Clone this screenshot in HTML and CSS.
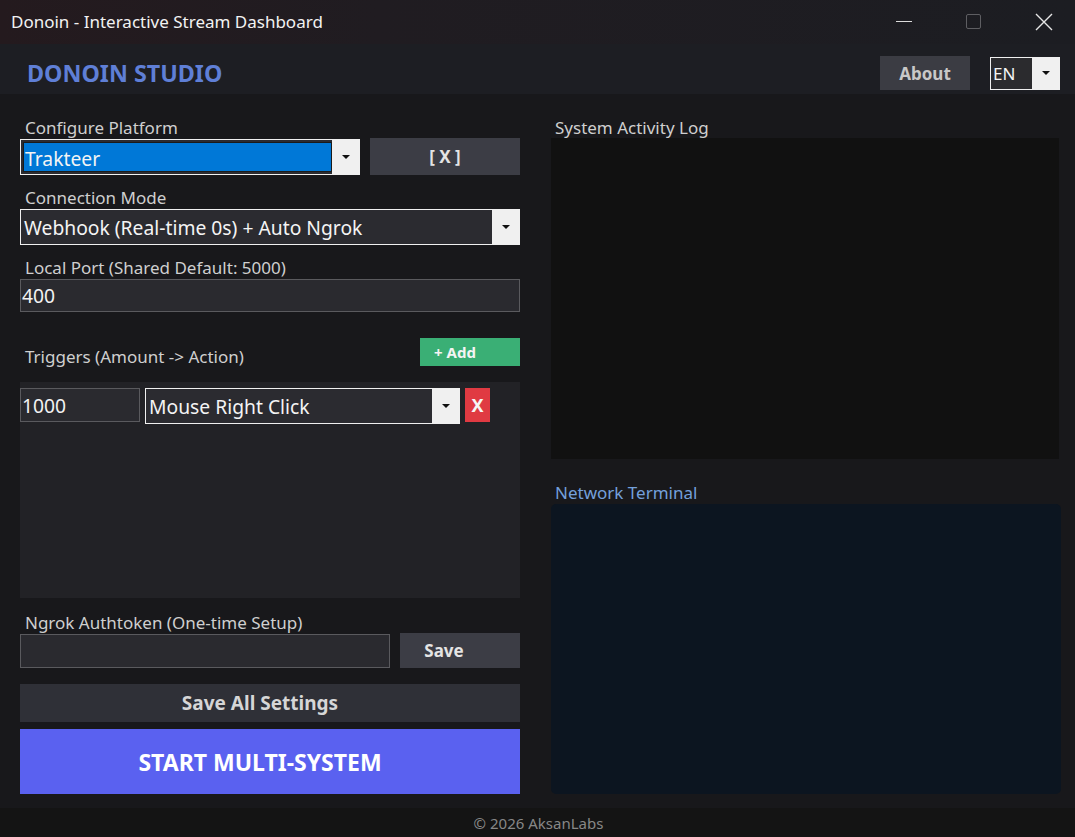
FILE: index.html
```html
<!DOCTYPE html>
<html lang="en">
  <head>
    <meta charset="UTF-8" />
    <meta name="viewport" content="width=device-width, initial-scale=1.0" />
    <title>Donoin - Interactive Stream Dashboard</title>
    <link rel="stylesheet" href="styles.css">
  </head>
  <body>
    <div class="window">
      <div class="titlebar">
        <span class="title">Donoin - Interactive Stream Dashboard</span>
        <div class="win-controls">
          <span class="win-btn">
            <svg width="16" height="16" viewBox="0 0 16 16"><path d="M0 7.5h16" stroke="#dcdcdc" stroke-width="1"/></svg>
          </span>
          <span class="win-btn">
            <svg width="16" height="16" viewBox="0 0 16 16"><rect x="0.5" y="0.5" width="14" height="14" rx="1.5" fill="none" stroke="#5e5e62" stroke-width="1"/></svg>
          </span>
          <span class="win-btn">
            <svg width="18" height="18" viewBox="0 0 18 18"><path d="M1 1L17 17M17 1L1 17" stroke="#e6e6e6" stroke-width="1.4"/></svg>
          </span>
        </div>
      </div>

      <header class="header">
        <div class="brand">DONOIN STUDIO</div>
        <div class="header-actions">
          <button class="btn btn-about">About</button>
          <div class="select select-lang">
            <span class="select-value">EN</span>
            <span class="select-arrow"><i class="caret"></i></span>
          </div>
        </div>
      </header>

      <main class="main">
        <section class="col col-left">
          <label class="field-label first">Configure Platform</label>
          <div class="row">
            <div class="select select-platform">
              <span class="select-value selected">Trakteer</span>
              <span class="select-arrow"><i class="caret"></i></span>
            </div>
            <button class="btn btn-clear">[ X ]</button>
          </div>

          <label class="field-label">Connection Mode</label>
          <div class="select select-mode">
            <span class="select-value">Webhook (Real-time 0s) + Auto Ngrok</span>
            <span class="select-arrow"><i class="caret"></i></span>
          </div>

          <label class="field-label">Local Port (Shared Default: 5000)</label>
          <div class="input input-port">400</div>

          <div class="triggers-head">
            <span class="field-label">Triggers (Amount -&gt; Action)</span>
            <button class="btn btn-add">+ Add</button>
          </div>
          <div class="triggers">
            <div class="trigger-row">
              <div class="input input-amount">1000</div>
              <div class="select select-action">
                <span class="select-value">Mouse Right Click</span>
                <span class="select-arrow"><i class="caret"></i></span>
              </div>
              <button class="btn btn-remove">X</button>
            </div>
          </div>

          <label class="field-label label-ngrok">Ngrok Authtoken (One-time Setup)</label>
          <div class="row">
            <div class="input input-token"></div>
            <button class="btn btn-save">Save</button>
          </div>

          <button class="btn btn-save-all">Save All Settings</button>
          <button class="btn btn-start">START MULTI-SYSTEM</button>
        </section>

        <section class="col col-right">
          <label class="field-label first">System Activity Log</label>
          <div class="log-box"></div>
          <label class="field-label label-terminal">Network Terminal</label>
          <div class="terminal-box"></div>
        </section>
      </main>

      <footer class="footer">© 2026 AksanLabs</footer>
    </div>
  </body>
</html>
```

FILE: styles.css
```css
* {
  margin: 0;
  padding: 0;
  box-sizing: border-box;
}

body {
  font-family: "Noto Sans", "Open Sans", sans-serif;
  background-color: #18181b;
  color: #d0d0d0;
  width: 1075px;
  height: 837px;
  overflow: hidden;
}

.window {
  display: flex;
  flex-direction: column;
  height: 837px;
}

/* title bar */
.titlebar {
  flex-shrink: 0;
  height: 44px;
  display: flex;
  align-items: center;
  justify-content: space-between;
  padding-left: 11px;
  background: linear-gradient(90deg, #241a1e 0%, #201c21 35%, #1c1d22 100%);
}

.title {
  font-size: 17px;
  color: #f2f2f2;
  margin-top: -2px;
}

.win-controls {
  display: flex;
  height: 100%;
  margin-right: -4px;
}

.win-btn {
  width: 70px;
  display: flex;
  align-items: center;
  justify-content: center;
  margin-top: -1px;
}

/* header */
.header {
  flex-shrink: 0;
  height: 50px;
  display: flex;
  align-items: center;
  justify-content: space-between;
  padding: 8px 15px 0 27px;
  background-color: #1d1e23;
}

.brand {
  font-size: 23.3px;
  font-weight: 700;
  color: #5f7fd6;
}

.header-actions {
  display: flex;
  align-items: center;
  gap: 20px;
}

.btn {
  font-family: inherit;
  border: none;
  color: #e4e4e4;
  font-weight: 700;
  cursor: pointer;
}

.btn-about {
  width: 90px;
  height: 34px;
  background-color: #3b3c43;
  color: #c8c8c8;
  font-size: 17px;
}

/* selects */
.select {
  display: flex;
  border: 1px solid #f0f0f0;
  background-color: #2b2b30;
}

.select-value {
  flex: 1;
  display: flex;
  align-items: center;
  padding-left: 3px;
  font-size: 19.3px;
  color: #f4f4f4;
  white-space: nowrap;
  overflow: hidden;
}

.select-value.selected {
  background-color: #0078d7;
  margin: 2px 0 2px 2px;
  border: 1px solid #1b1b1b;
  padding-left: 1px;
  padding-top: 2px;
}

.select-arrow {
  width: 27px;
  background-color: #f0f0f0;
  display: flex;
  align-items: center;
  justify-content: center;
}

.caret {
  width: 0;
  height: 0;
  border-left: 4px solid transparent;
  border-right: 4px solid transparent;
  border-top: 4px solid #111;
}

.select-lang {
  width: 70px;
  height: 33px;
  background-color: #2b2b2e;
}

.select-lang .select-value {
  font-size: 17px;
  padding-left: 2px;
}

/* main */
.main {
  flex: 1;
  min-height: 0;
  display: flex;
  gap: 31px;
  padding: 0 14px 14px 20px;
  background-color: #18181b;
}

.col {
  display: flex;
  flex-direction: column;
}

.col-left {
  width: 500px;
}

.col-right {
  flex: 1;
}

.field-label {
  display: block;
  font-size: 17px;
  color: #cfcfcf;
  padding-left: 5px;
  height: 22px;
  line-height: 22px;
  margin-top: 12px;
}

.field-label.first {
  margin-top: 23px;
}

.row {
  display: flex;
  gap: 10px;
}

.select-platform {
  width: 340px;
  height: 36px;
}

.btn-clear {
  flex: 1;
  height: 37px;
  margin-top: -1px;
  background-color: #3c3d45;
  font-size: 17px;
}

.select-mode {
  height: 36px;
}

.input {
  border: 1px solid #5a5a5e;
  background-color: #2a2a2f;
  font-size: 19.3px;
  color: #f2f2f2;
  display: flex;
  align-items: center;
  padding-left: 1px;
}

.input-port {
  height: 33px;
}

.triggers-head {
  display: flex;
  justify-content: space-between;
  align-items: flex-start;
  margin-top: 26px;
  height: 28px;
}

.triggers-head .field-label {
  margin-top: 8px;
}

.btn-add {
  width: 100px;
  height: 28px;
  padding-right: 30px;
  background-color: #3aaf75;
  color: #f4f4f4;
  font-size: 15px;
}

.triggers {
  flex-shrink: 0;
  height: 216px;
  margin-top: 16px;
  background-color: #222226;
  padding-top: 6px;
}

.trigger-row {
  display: flex;
  align-items: flex-start;
  gap: 5px;
}

.input-amount {
  width: 120px;
  height: 34px;
}

.select-action {
  width: 315px;
  height: 36px;
}

.btn-remove {
  width: 25px;
  height: 34px;
  background-color: #e03a42;
  color: #f6f6f6;
  font-size: 18px;
}

.label-ngrok {
  margin-top: 14px;
}

.input-token {
  width: 370px;
  height: 34px;
}

.btn-save {
  flex: 1;
  height: 35px;
  margin-top: -1px;
  padding-right: 32px;
  background-color: #3c3d45;
  font-size: 17px;
}

.btn-save-all {
  flex-shrink: 0;
  height: 38px;
  margin-top: 16px;
  padding-right: 20px;
  background-color: #2f3037;
  color: #d6d6d6;
  font-size: 19px;
}

.btn-start {
  flex-shrink: 0;
  height: 65px;
  margin-top: 7px;
  padding-right: 20px;
  background-color: #5a61f0;
  color: #ffffff;
  font-size: 23px;
}

.col-right .field-label {
  padding-left: 4px;
}

.log-box {
  height: 321px;
  margin-top: -1px;
  margin-right: 2px;
  background-color: #111111;
}

.label-terminal {
  color: #74a0db;
  margin-top: 23px;
}

.terminal-box {
  flex: 1;
  background-color: #0c1520;
  border-radius: 5px;
}

/* footer */
.footer {
  flex-shrink: 0;
  height: 29px;
  background-color: #141414;
  color: #878787;
  font-size: 15px;
  text-align: center;
  line-height: 30px;
  padding-left: 2px;
}
```
